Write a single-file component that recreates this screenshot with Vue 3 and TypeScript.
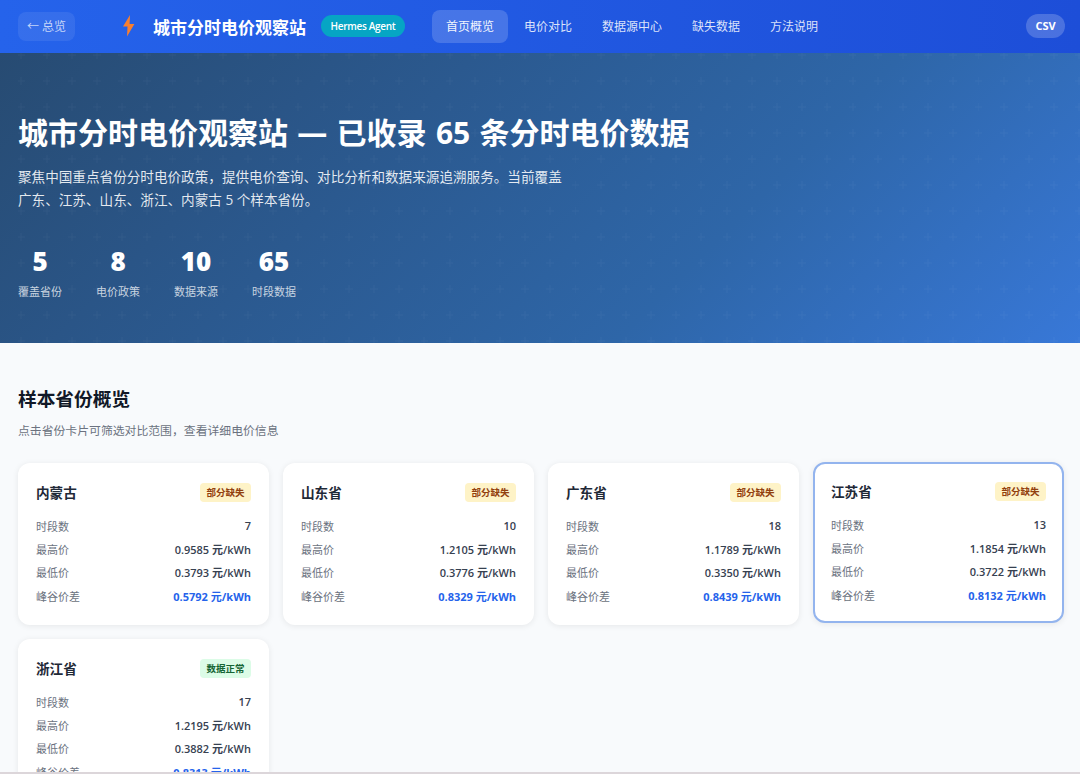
<script setup lang="ts">
interface Province {
  name: string;
  status: string;
  ok: boolean;
  slots: number;
  high: string;
  low: string;
  spread: string;
  selected?: boolean;
}

const navItems = ['首页概览', '电价对比', '数据源中心', '缺失数据', '方法说明'];

const stats = [
  { value: '5', label: '覆盖省份' },
  { value: '8', label: '电价政策' },
  { value: '10', label: '数据来源' },
  { value: '65', label: '时段数据' },
];

const provinces: Province[] = [
  { name: '内蒙古', status: '部分缺失', ok: false, slots: 7, high: '0.9585', low: '0.3793', spread: '0.5792' },
  { name: '山东省', status: '部分缺失', ok: false, slots: 10, high: '1.2105', low: '0.3776', spread: '0.8329' },
  { name: '广东省', status: '部分缺失', ok: false, slots: 18, high: '1.1789', low: '0.3350', spread: '0.8439' },
  { name: '江苏省', status: '部分缺失', ok: false, slots: 13, high: '1.1854', low: '0.3722', spread: '0.8132', selected: true },
  { name: '浙江省', status: '数据正常', ok: true, slots: 17, high: '1.2195', low: '0.3882', spread: '0.8313' },
];
</script>

<template>
  <div class="page">
    <header class="topbar">
      <a class="back">← 总览</a>
      <div class="brand">
        <svg class="bolt" width="14" height="22" viewBox="0 0 14 22">
          <path d="M8 0 L1 11.5 L5.5 11.5 L5 21.5 L12.4 9 L7.6 9 Z" fill="#f97f2f" />
        </svg>
        <span class="brand-name">城市分时电价观察站</span>
      </div>
      <span class="agent">Hermes Agent</span>
      <nav class="nav">
        <a v-for="(item, i) in navItems" :key="item" class="nav-item" :class="{ active: i === 0 }">{{ item }}</a>
      </nav>
      <a class="csv">CSV</a>
    </header>

    <section class="hero">
      <h1>城市分时电价观察站 — 已收录 65 条分时电价数据</h1>
      <p class="lead">聚焦中国重点省份分时电价政策，提供电价查询、对比分析和数据来源追溯服务。当前覆盖广东、江苏、山东、浙江、内蒙古 5 个样本省份。</p>
      <div class="stats">
        <div v-for="s in stats" :key="s.label" class="stat">
          <div class="stat-value">{{ s.value }}</div>
          <div class="stat-label">{{ s.label }}</div>
        </div>
      </div>
    </section>

    <main class="content">
      <h2>样本省份概览</h2>
      <p class="sub">点击省份卡片可筛选对比范围，查看详细电价信息</p>
      <div class="grid">
        <article v-for="p in provinces" :key="p.name" class="card" :class="{ selected: p.selected }">
          <div class="card-head">
            <h3>{{ p.name }}</h3>
            <span class="badge" :class="p.ok ? 'ok' : 'warn'">{{ p.status }}</span>
          </div>
          <div class="row"><span>时段数</span><b>{{ p.slots }}</b></div>
          <div class="row"><span>最高价</span><b>{{ p.high }} 元/kWh</b></div>
          <div class="row"><span>最低价</span><b>{{ p.low }} 元/kWh</b></div>
          <div class="row"><span>峰谷价差</span><b class="spread">{{ p.spread }} 元/kWh</b></div>
        </article>
      </div>
    </main>
  </div>
</template>

<style>
html, body {
  margin: 0;
  height: 774px;
  overflow: hidden;
  background: #f8fafc;
}
</style>

<style scoped>
.page {
  height: 774px;
  overflow: hidden;
  font-family: "Open Sans", "Noto Sans CJK SC", sans-serif;
  color: #1f2937;
  border-bottom: 2px solid #dcd6da;
  box-sizing: border-box;
}

.topbar {
  height: 53px;
  display: flex;
  align-items: center;
  padding: 0 18px 1px;
  background: linear-gradient(90deg, #2563eb, #1d4ed8);
  box-sizing: border-box;
}

.back {
  width: 57px;
  height: 29px;
  line-height: 29px;
  text-align: center;
  font-size: 12px;
  color: rgba(255, 255, 255, 0.72);
  background: rgba(255, 255, 255, 0.08);
  border-radius: 8px;
}

.brand {
  display: flex;
  align-items: center;
  margin-left: 47px;
  gap: 17px;
}

.bolt {
  display: block;
}

.brand-name {
  font-size: 17px;
  font-weight: 700;
  color: #fff;
}

.agent {
  margin-left: 15px;
  width: 84px;
  height: 22px;
  line-height: 22px;
  text-align: center;
  font-size: 10px;
  letter-spacing: -0.3px;
  font-weight: 600;
  color: #fff;
  background: #06a5c4;
  border-radius: 11px;
}

.nav {
  display: flex;
  gap: 2px;
  margin-left: 27px;
}

.nav-item {
  height: 33px;
  line-height: 33px;
  padding: 0 14px;
  font-size: 12px;
  color: rgba(255, 255, 255, 0.85);
  border-radius: 8px;
}

.nav-item.active {
  color: rgba(255, 255, 255, 0.95);
  background: rgba(255, 255, 255, 0.17);
}

.csv {
  margin-left: auto;
  margin-right: -3px;
  width: 39px;
  height: 24px;
  line-height: 24px;
  text-align: center;
  font-size: 11px;
  font-weight: 700;
  color: #fff;
  background: rgba(255, 255, 255, 0.2);
  border-radius: 12px;
}

.hero {
  height: 290px;
  padding: 58px 18px 0;
  box-sizing: border-box;
  color: #fff;
  background-image:
    url("data:image/svg+xml,%3Csvg xmlns='http://www.w3.org/2000/svg' width='26' height='26'%3E%3Cpath d='M13 9v8M9 13h8' stroke='%23fff' stroke-opacity='.035' fill='none'/%3E%3C/svg%3E"),
    linear-gradient(135deg, #274b72 0%, #2a5587 25%, #2e66a8 66%, #3878d8 100%);
  background-size: 25.2px 26px, 100% 100%;
  background-position: 8.8px -11px, 0 0;
}

.hero h1 {
  margin: 0;
  font-size: 30px;
  line-height: 44px;
  font-weight: 700;
  word-spacing: 1.5px;
}

.lead {
  margin: 11px 0 0;
  width: 550px;
  font-size: 13.6px;
  line-height: 22.5px;
  color: rgba(255, 255, 255, 0.88);
}

.stats {
  display: flex;
  gap: 34px;
  margin-top: 32px;
}

.stat {
  width: 44px;
  text-align: center;
}

.stat-value {
  font-size: 26px;
  line-height: 36px;
  font-weight: 800;
  white-space: nowrap;
}

.stat-label {
  margin-top: 5px;
  font-size: 11px;
  line-height: 16px;
  white-space: nowrap;
  color: rgba(255, 255, 255, 0.75);
}

.content {
  padding: 41px 16px 0 18px;
}

.content h2 {
  margin: 0;
  font-size: 18.7px;
  line-height: 30px;
  font-weight: 700;
  color: #111827;
}

.sub {
  margin: 7px 0 0;
  font-size: 11.85px;
  line-height: 18px;
  color: #6b7280;
}

.grid {
  display: grid;
  grid-template-columns: repeat(4, 1fr);
  gap: 14px;
  margin-top: 24px;
}

.card {
  height: 162px;
  padding: 18px 18px 0;
  box-sizing: border-box;
  background: #fff;
  border-radius: 12px;
  box-shadow: 0 1px 6px rgba(0, 0, 0, 0.08);
}

.card.selected {
  height: 161px;
  border: 2px solid #93b4ee;
  padding: 16px 16px 0;
  transform: translateY(-1px);
}

.card-head {
  display: flex;
  align-items: center;
  justify-content: space-between;
  height: 22px;
  margin-bottom: 11px;
}

.card-head h3 {
  margin: 0;
  font-size: 13.6px;
  font-weight: 700;
  color: #1f2937;
}

.badge {
  height: 19px;
  line-height: 19px;
  padding: 0 6.5px;
  font-size: 9.5px;
  font-weight: 600;
  border-radius: 4px;
}

.badge.warn {
  color: #92400e;
  background: #fef3c7;
}

.badge.ok {
  color: #166534;
  background: #dcfce7;
}

.row {
  display: flex;
  justify-content: space-between;
  align-items: center;
  height: 23.3px;
  font-size: 11px;
  color: #6b7280;
}

.row b {
  font-weight: 600;
  color: #374151;
}

.row b.spread {
  font-weight: 700;
  color: #2563eb;
}
</style>
